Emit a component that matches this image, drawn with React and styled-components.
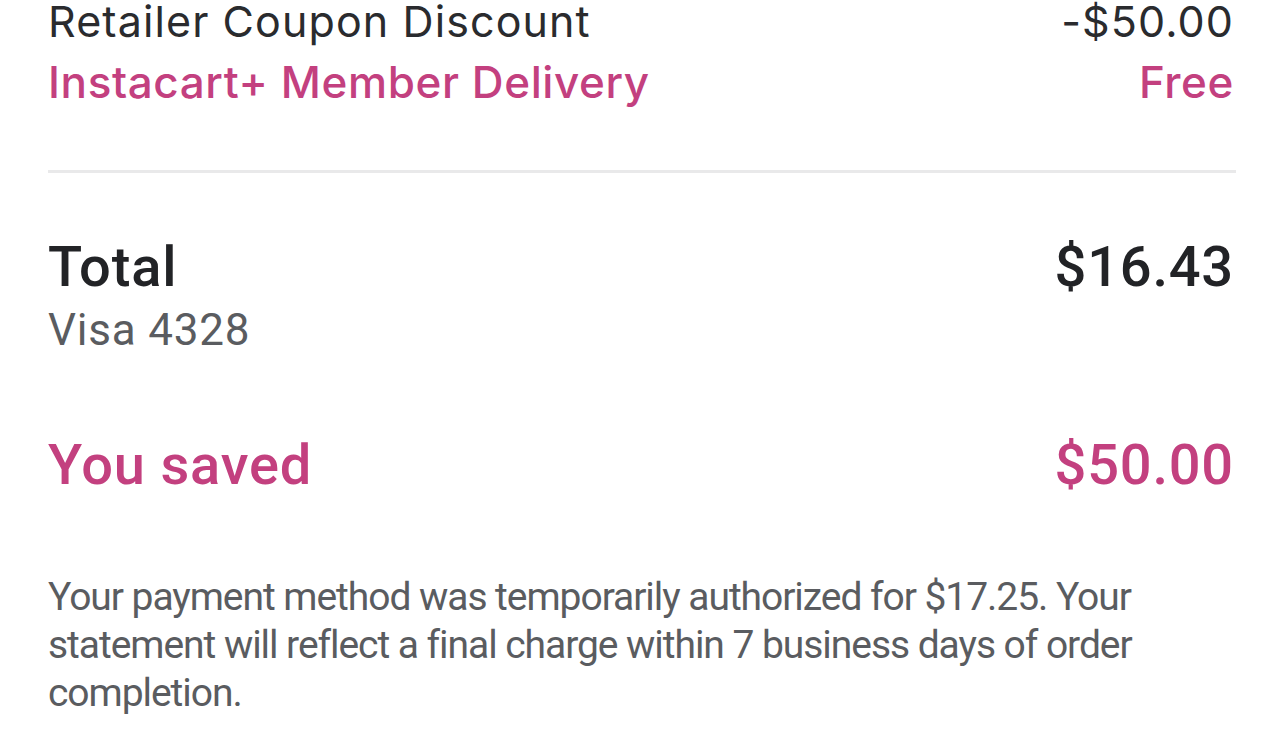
import React from "react";
import styled, { createGlobalStyle } from "styled-components";

const Global = createGlobalStyle`
  html, body { margin: 0; padding: 0; background: #ffffff; }
  body { font-family: Roboto, "Liberation Sans", sans-serif; -webkit-font-smoothing: antialiased; }
`;

const PINK = "#c3407f";
const DARK = "#2a2b2e";
const GRAY = "#5a5c60";

const Page = styled.div`
  padding: 0 50px 0 48px;
  margin-top: -9px;
  display: flex;
  flex-direction: column;
`;

const LineRow = styled.div`
  display: flex;
  justify-content: space-between;
  align-items: baseline;
  font-family: Inter, Roboto, sans-serif;
  font-size: ${(p) => (p.$accent ? "44px" : "43px")};
  letter-spacing: ${(p) => (p.$accent ? "0.6px" : "1.1px")};
  line-height: 61px;
  color: ${(p) => (p.$accent ? PINK : DARK)};
  font-weight: ${(p) => (p.$accent ? 500 : 400)};
`;

const Divider = styled.hr`
  border: none;
  height: 3px;
  background: #e9e9ea;
  margin: 57px -2px 0 0;
`;

const TotalBlock = styled.div`
  margin-top: 61px;
  display: flex;
  justify-content: space-between;
  align-items: flex-start;
`;

const TotalLeft = styled.div`
  display: flex;
  flex-direction: column;
`;

const BigLabel = styled.div`
  font-size: 56px;
  line-height: 66px;
  font-weight: 500;
  letter-spacing: 0.8px;
  color: ${(p) => p.$color || "#222326"};
`;

const SubLabel = styled.div`
  font-size: 44px;
  line-height: 60px;
  letter-spacing: 0.8px;
  color: ${GRAY};
`;

const SavedRow = styled.div`
  margin-top: 72px;
  display: flex;
  justify-content: space-between;
  align-items: baseline;
`;

const Note = styled.p`
  margin: 75px 0 0 0;
  font-size: 39px;
  line-height: 48px;
  letter-spacing: -1.05px;
  color: ${GRAY};
`;

export default function App() {
  return (
    <>
      <Global />
      <Page>
        <LineRow>
          <span>Retailer Coupon Discount</span>
          <span>-$50.00</span>
        </LineRow>
        <LineRow $accent>
          <span>Instacart+ Member Delivery</span>
          <span>Free</span>
        </LineRow>
        <Divider />
        <TotalBlock>
          <TotalLeft>
            <BigLabel>Total</BigLabel>
            <SubLabel>Visa 4328</SubLabel>
          </TotalLeft>
          <BigLabel>$16.43</BigLabel>
        </TotalBlock>
        <SavedRow>
          <BigLabel $color={PINK}>You saved</BigLabel>
          <BigLabel $color={PINK}>$50.00</BigLabel>
        </SavedRow>
        <Note>
          Your payment method was temporarily authorized for $17.25. Your
          statement will reflect a final charge within 7 business days of order
          completion.
        </Note>
      </Page>
    </>
  );
}
